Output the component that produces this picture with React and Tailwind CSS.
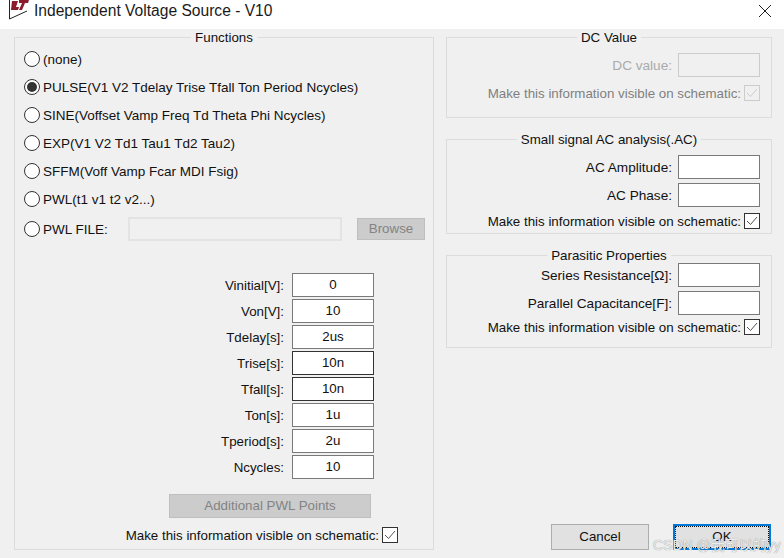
import React from "react";

const fields = [
  ["Vinitial[V]:", "0"],
  ["Von[V]:", "10"],
  ["Tdelay[s]:", "2us"],
  ["Trise[s]:", "10n", true],
  ["Tfall[s]:", "10n", true],
  ["Ton[s]:", "1u"],
  ["Tperiod[s]:", "2u"],
  ["Ncycles:", "10"],
];

const radios = [
  "(none)",
  "PULSE(V1 V2 Tdelay Trise Tfall Ton Period Ncycles)",
  "SINE(Voffset Vamp Freq Td Theta Phi Ncycles)",
  "EXP(V1 V2 Td1 Tau1 Td2 Tau2)",
  "SFFM(Voff Vamp Fcar MDI Fsig)",
  "PWL(t1 v1 t2 v2...)",
];

function Radio({ checked }) {
  return (
    <div className="w-[16px] h-[16px] rounded-full border border-[#333] bg-white flex items-center justify-center shrink-0">
      {checked && <div className="w-[10px] h-[10px] rounded-full bg-[#333]" />}
    </div>
  );
}

function Check({ disabled }) {
  return (
    <div className={`w-[16px] h-[16px] border flex items-center justify-center shrink-0 ${disabled ? "border-[#ccc]" : "border-[#333] bg-white"}`}>
      <svg width="12" height="10" viewBox="0 0 12 10" fill="none">
        <path d="M1 5l3.5 3.5L11 1" stroke={disabled ? "#ccc" : "#555"} strokeWidth="1" />
      </svg>
    </div>
  );
}

function Group({ title, className, children }) {
  return (
    <div className={`relative border border-[#dcdcdc] ${className}`}>
      <span className="absolute -top-[8px] left-1/2 -translate-x-1/2 bg-[#f0f0f0] px-[4px] leading-[16px] whitespace-nowrap">{title}</span>
      {children}
    </div>
  );
}

function Field({ label, value, dark, disabled, narrow }) {
  return (
    <div className={`flex items-center justify-end ${narrow ? "gap-[6px] text-[13.6px]" : "gap-[8px]"}`}>
      <span className={`pt-[2px] ${disabled ? "text-[#aaa]" : ""}`}>{label}</span>
      <div className={`w-[82px] h-[24px] border flex items-center justify-center ${disabled ? "border-[#ccc]" : `bg-white ${dark ? "border-[#333]" : "border-[#7a7a7a]"}`}`}>{value}</div>
    </div>
  );
}

function Visible({ disabled }) {
  return (
    <div className="flex items-center justify-end gap-[3px] h-[16px]">
      <span className={`pt-[2px] ${disabled ? "text-[#808080]" : ""}`}>Make this information visible on schematic:</span>
      <Check disabled={disabled} />
    </div>
  );
}

export default function App() {
  return (
    <div className="w-[784px] h-[558px] overflow-hidden relative bg-[#f0f0f0] text-[#111] text-[13.33px] font-['Liberation_Sans',Arial,sans-serif]">
      <div className="h-[29px] bg-white flex items-start text-[#1a1a1a]">
        <svg className="ml-[9px]" width="20" height="20" viewBox="0 0 20 20" fill="none">
          <path d="M0.5 0v19L18 11" stroke="#222" strokeWidth="1" />
          <path d="M3 1h6L7 7h3l-1 3H2zM10 0h10l-1 3h-3l-3 7h-3l3-7h-3z" fill="#8c1c2c" />
        </svg>
        <span className="ml-[5px] text-[15.6px] leading-[21px]">Independent Voltage Source - V10</span>
        <svg className="ml-auto mr-[12px] mt-[4px]" width="14" height="14" viewBox="0 0 14 14" fill="none">
          <path d="M1 1l12 12M13 1L1 13" stroke="#222" strokeWidth="1" />
        </svg>
      </div>

      <div className="flex gap-[12px] pl-[14px] pt-[8px]">
        <Group title="Functions" className="w-[420px] h-[513px] pt-[13px] pl-[9px] pr-[7px]">
          <div className="flex flex-col gap-[12px]">
            {radios.map((r, i) => (
              <div key={r} className="flex items-center gap-[3px] h-[16px]">
                <Radio checked={i === 1} />
                <span className="text-[13.5px] pt-[2px]">{r}</span>
              </div>
            ))}
          </div>
          <div className="flex items-center mt-[10px] h-[24px]">
            <Radio />
            <span className="ml-[3px] w-[85px] text-[13.5px] pt-[2px]">PWL FILE:</span>
            <div className="w-[214px] h-[24px] border-2 border-[#e3e3e3]" />
            <div className="ml-[15px] w-[68px] h-[22px] bg-[#ccc] border border-[#bfbfbf] text-[#838383] flex items-center justify-center">Browse</div>
          </div>
          <div className="mt-[32px] w-[350px] flex flex-col gap-[2px]">
            {fields.map(([l, v, d]) => (
              <Field key={l} label={l} value={v} dark={d} />
            ))}
          </div>
          <div className="mt-[15px] ml-[145px] w-[202px] h-[24px] bg-[#ccc] border border-[#bfbfbf] text-[#838383] flex items-center justify-center">Additional PWL Points</div>
          <div className="mt-[9px] w-[374px]">
            <Visible />
          </div>
        </Group>

        <div className="w-[326px] flex flex-col">
          <Group title="DC Value" className="h-[81px] pt-[15px] pr-[11px]">
            <Field label="DC value:" disabled narrow />
            <div className="mt-[8px]">
              <Visible disabled />
            </div>
          </Group>
          <Group title="Small signal AC analysis(.AC)" className="h-[95px] mt-[21px] pt-[15px] pr-[11px]">
            <div className="flex flex-col gap-[4px]">
              <Field label="AC Amplitude:" narrow />
              <Field label="AC Phase:" narrow />
            </div>
            <div className="mt-[6px]">
              <Visible />
            </div>
          </Group>
          <Group title="Parasitic Properties" className="h-[93px] mt-[21px] pt-[7px] pr-[11px]">
            <div className="flex flex-col gap-[4px]">
              <Field label="Series Resistance[Ω]:" narrow />
              <Field label="Parallel Capacitance[F]:" narrow />
            </div>
            <div className="mt-[4px]">
              <Visible />
            </div>
          </Group>
          <div className="flex justify-end gap-[24px] mt-[176px] mr-[1px]">
            <div className="w-[98px] h-[26px] bg-[#e1e1e1] border border-[#adadad] flex items-center justify-center">Cancel</div>
            <div className="w-[98px] h-[26px] bg-[#e1e1e1] border-2 border-[#0078d7] flex items-center justify-center">
              <div className="w-full h-full border border-dotted border-[#111] flex items-center justify-center">OK</div>
            </div>
          </div>
        </div>
      </div>

      <span className="absolute left-[653px] top-[535px] text-[14px] text-[#ececec] [text-shadow:0_0_1px_#777] whitespace-nowrap font-['Liberation_Sans','Noto_Sans_CJK_SC',sans-serif]">CSDN @我可以的yy</span>
    </div>
  );
}
